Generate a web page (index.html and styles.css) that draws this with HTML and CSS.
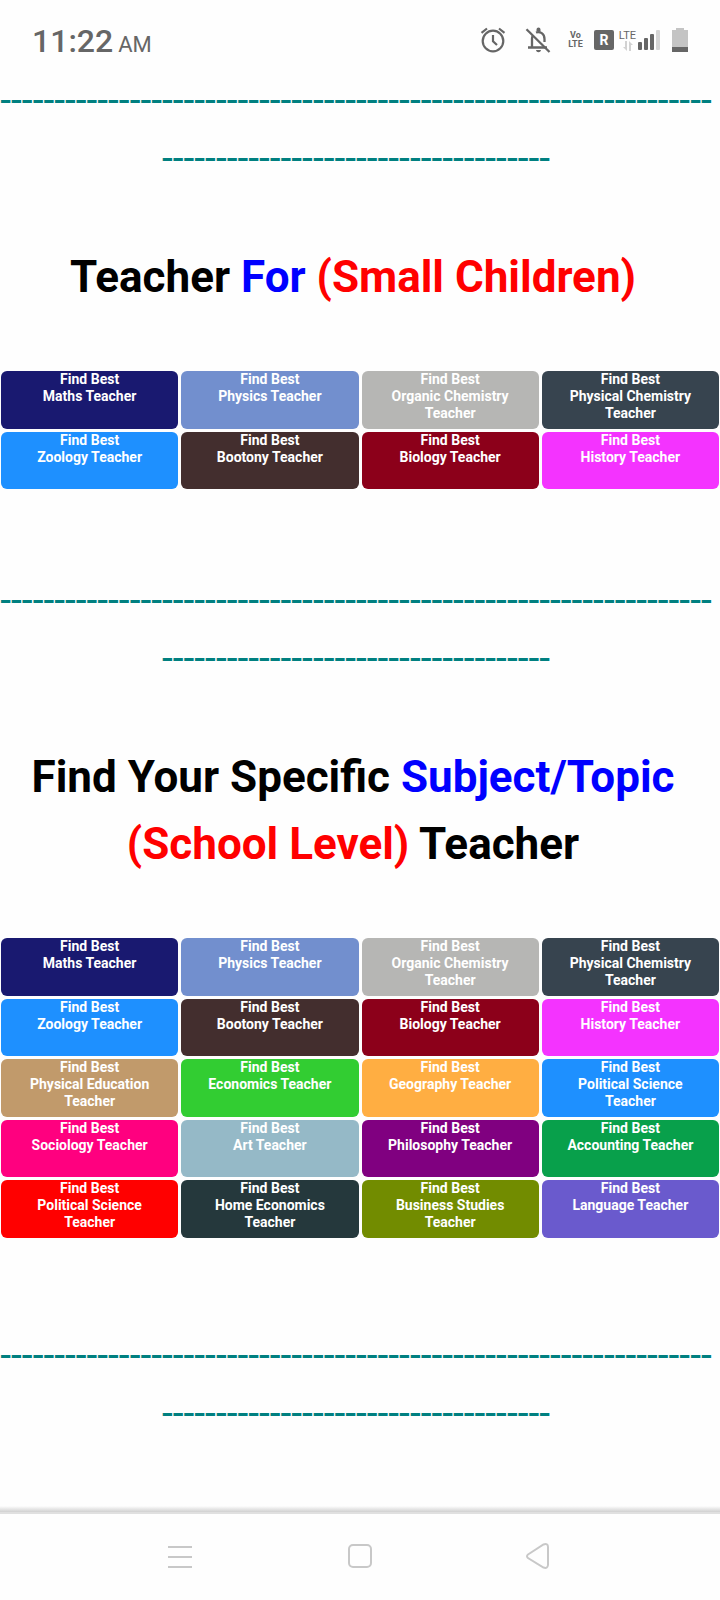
FILE: index.html
```html
<!DOCTYPE html>
<html lang="en">
<head>
<meta charset="utf-8">
<meta name="viewport" content="width=device-width, initial-scale=1">
<title>Find Teachers</title>
<link rel="stylesheet" href="styles.css">
</head>
<body>
<header class="status">
  <div class="clock">11:22 <span class="meridiem">AM</span></div>
  <div class="indicators">
    <svg class="alarm" width="26" height="26" viewBox="0 0 26 26" fill="none" stroke="#666" stroke-width="2.2"><circle cx="13" cy="14" r="10.3"/><path d="M13 8v6.3l4 3.7M1.500 5.800 7 1.500M24.500 5.800 19 1.500"/></svg>
    <svg class="bell" width="26" height="26" viewBox="0 0 26 26"><path d="M3 20.500h19M7 20V11.500a6 6 0 0 1 1-3M11 5.500C15 4 19.500 6.500 19.500 12v3" fill="none" stroke="#666" stroke-width="2.300"/><path d="M11.500 4.500V2.500a2 2 0 0 1 4 0v2zM11 23h5c-.5 3-4.500 3-5 0z" fill="#666"/><path d="M1.500 2.200 24.500 25" stroke="#666" stroke-width="2.300"/></svg>
    <div class="volte"><span>Vo</span><span>LTE</span></div>
    <div class="roaming">R</div>
    <div class="network">
      <span>LTE</span>
      <svg width="10" height="10" viewBox="0 0 10 10" fill="#d2d2d2"><path d="M2 0h2v10L0 6h2zM6 10V0l4 4H8v6z"/></svg>
    </div>
    <svg class="signal" width="22" height="20" viewBox="0 0 22 20" fill="#666"><rect y="12" width="4" height="8" rx="1"/><rect x="6" y="8" width="4" height="12" rx="1"/><rect x="12" y="4" width="4" height="16" rx="1"/><rect x="18" width="4" height="20" rx="1" fill="#d5d5d5"/></svg>
    <svg class="battery" width="16" height="24" viewBox="0 0 16 24"><path d="M0 2h4V0h8v2h4v17H0z" fill="#c4c4c4"/><path d="M0 19h16v5H0z" fill="#666"/></svg>
  </div>
</header>
<main class="content">
  <p class="divider">------------------------------------------------------------------------------------------------------</p>
  <section class="group">
    <h2 class="title">Teacher <span class="blue">For</span> <span class="red">(Small Children)</span></h2>
    <div class="grid short">
      <button class="tile navy">Find Best<br>Maths Teacher</button>
      <button class="tile periwinkle">Find Best<br>Physics Teacher</button>
      <button class="tile silver">Find Best<br>Organic Chemistry Teacher</button>
      <button class="tile slate">Find Best<br>Physical Chemistry Teacher</button>
      <button class="tile azure">Find Best<br>Zoology Teacher</button>
      <button class="tile brown">Find Best<br>Bootony Teacher</button>
      <button class="tile maroon">Find Best<br>Biology Teacher</button>
      <button class="tile magenta">Find Best<br>History Teacher</button>
    </div>
  </section>
  <p class="divider">------------------------------------------------------------------------------------------------------</p>
  <section class="group school">
    <h2 class="title">Find Your Specific <span class="blue">Subject/Topic</span> <span class="red">(School Level)</span> Teacher</h2>
    <div class="grid tall">
      <button class="tile navy">Find Best<br>Maths Teacher</button>
      <button class="tile periwinkle">Find Best<br>Physics Teacher</button>
      <button class="tile silver">Find Best<br>Organic Chemistry Teacher</button>
      <button class="tile slate">Find Best<br>Physical Chemistry Teacher</button>
      <button class="tile azure">Find Best<br>Zoology Teacher</button>
      <button class="tile brown">Find Best<br>Bootony Teacher</button>
      <button class="tile maroon">Find Best<br>Biology Teacher</button>
      <button class="tile magenta">Find Best<br>History Teacher</button>
      <button class="tile tan">Find Best<br>Physical Education Teacher</button>
      <button class="tile lime">Find Best<br>Economics Teacher</button>
      <button class="tile orange">Find Best<br>Geography Teacher</button>
      <button class="tile azure">Find Best<br>Political Science Teacher</button>
      <button class="tile pink">Find Best<br>Sociology Teacher</button>
      <button class="tile mist">Find Best<br>Art Teacher</button>
      <button class="tile purple">Find Best<br>Philosophy Teacher</button>
      <button class="tile green">Find Best<br>Accounting Teacher</button>
      <button class="tile scarlet">Find Best<br>Political Science Teacher</button>
      <button class="tile pine">Find Best<br>Home Economics Teacher</button>
      <button class="tile olive">Find Best<br>Business Studies Teacher</button>
      <button class="tile violet">Find Best<br>Language Teacher</button>
    </div>
  </section>
  <p class="divider">------------------------------------------------------------------------------------------------------</p>
</main>
<nav class="navbar">
  <button class="key" aria-label="Recent apps"><svg width="28" height="28" viewBox="0 0 28 28" stroke="#c8c8c8" stroke-width="2"><path d="M2 4h24M2 14h24M2 24h24"/></svg></button>
  <button class="key" aria-label="Home"><svg width="28" height="28" viewBox="0 0 28 28" fill="none" stroke="#c8c8c8" stroke-width="2"><rect x="3" y="2" width="22" height="22" rx="4"/></svg></button>
  <button class="key" aria-label="Back"><svg width="28" height="28" viewBox="0 0 28 28" fill="none" stroke="#c8c8c8" stroke-width="2"><path d="M2 11.500 17.500 1.500Q22 0 22 4V22Q21.500 26 17.500 24.500L2 15Q0 13 2 11.500z"/></svg></button>
</nav>
</body>
</html>
```
FILE: styles.css
```css
* { box-sizing: border-box; }
body {
  margin: 0;
  min-height: 100vh;
  display: flex;
  flex-direction: column;
  background: #fefefe;
  color: #000;
  font-family: Roboto, "Liberation Sans", sans-serif;
}
.status {
  height: 71px;
  padding: 10px 32px 0;
  display: flex;
  justify-content: space-between;
  align-items: flex-start;
  color: #666;
}
.clock { font-size: 32px; line-height: 62px; font-weight: 500; }
.meridiem { font-size: 22px; margin-left: -3px; font-weight: 400; }
.indicators { display: flex; align-items: center; height: 60px; }
.alarm { margin-right: 19px; }
.bell { margin-right: 16px; }
.volte {
  display: flex;
  flex-direction: column;
  width: 17px;
  margin-right: 10px;
  font-size: 9px;
  line-height: 9px;
  font-weight: 700;
  text-align: center;
}
.roaming {
  width: 20px;
  height: 20px;
  margin-right: 3px;
  border-radius: 2px;
  background: #666;
  color: #fff;
  font-size: 14px;
  line-height: 20px;
  font-weight: 700;
  text-align: center;
}
.network {
  display: flex;
  flex-direction: column;
  align-items: center;
  width: 21px;
  font-size: 11px;
  line-height: 11px;
}
.signal { margin-right: 12px; }
.content { flex: 1; }
.divider {
  margin: 0;
  padding-right: 8px;
  color: #008080;
  font-size: 39px;
  line-height: 58px;
  text-align: center;
  overflow-wrap: anywhere;
}
.group { padding: 57px 1px 82px; }
.school { padding-bottom: 88px; }
.title {
  margin: 0 0 60px;
  padding-right: 14px;
  font-size: 44px;
  line-height: 67px;
  font-weight: 700;
  text-align: center;
}
.blue { color: #00f; }
.red { color: #f00; }
.grid {
  display: grid;
  grid-template-columns: repeat(4, 1fr);
  grid-auto-rows: 1fr;
  gap: 3px;
}
.short { min-height: 118px; }
.tall { min-height: 300px; }
.tile {
  display: flex;
  flex-direction: column;
  justify-content: flex-start;
  border: 0;
  border-radius: 6px;
  padding: 0 20px;
  color: #fff;
  font-family: inherit;
  font-size: 14px;
  line-height: 17px;
  font-weight: 700;
  text-align: center;
}
.navy { background: #191970; }
.periwinkle { background: #728fce; }
.silver { background: #b6b6b4; }
.slate { background: #37444f; }
.azure { background: #1e90ff; }
.brown { background: #432e2e; }
.maroon { background: #8c001a; }
.magenta { background: #f433ff; }
.tan { background: #c19a6b; }
.lime { background: #32cd32; }
.orange { background: #ffae42; }
.pink { background: #ff007f; }
.mist { background: #95b9c7; }
.purple { background: #800080; }
.green { background: #08a04b; }
.scarlet { background: #f00; }
.pine { background: #25383c; }
.olive { background: #728c00; }
.violet { background: #6a5acd; }
.navbar {
  display: flex;
  justify-content: center;
  align-items: center;
  gap: 152px;
  height: 94px;
  padding-top: 8px;
  background: linear-gradient(#fefefe, #d0d0d0 6px, #e0e0e0 6px, #e0e0e0 8px, #fefefe 8px);
}
.key { border: 0; padding: 0; background: none; line-height: 0; }
```
